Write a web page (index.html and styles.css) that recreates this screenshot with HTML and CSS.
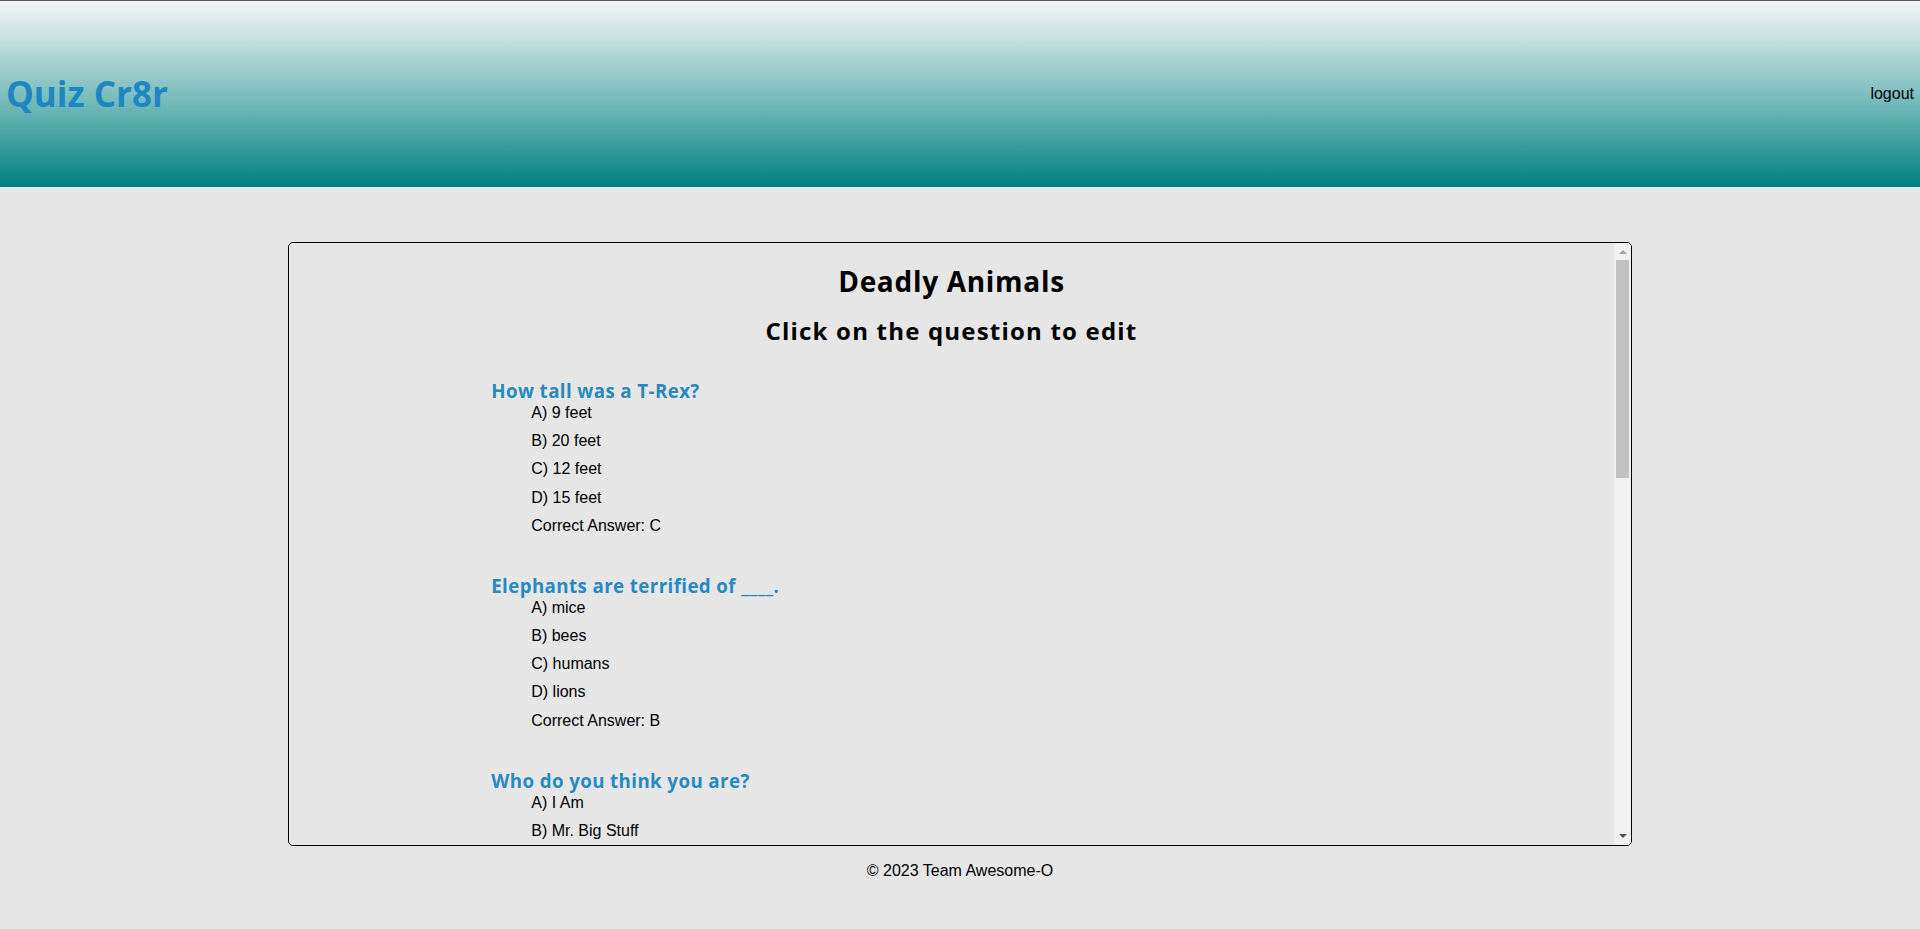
FILE: index.html
```html
<!DOCTYPE html>
<html lang="en">
<head>
<meta charset="utf-8">
<title>Quiz Cr8r</title>
<link rel="stylesheet" href="styles.css">
</head>
<body>
<header class="site-header">
  <h1 class="brand">Quiz Cr8r</h1>
  <a class="logout" href="#">logout</a>
</header>
<main class="main">
  <section class="quiz-frame">
    <div class="quiz-scroll">
      <h1 class="quiz-title">Deadly Animals</h1>
      <h2 class="quiz-sub">Click on the question to edit</h2>
      <div class="questions">
        <div class="question">
          <h3 class="q-text">How tall was a T-Rex?</h3>
          <ul class="answers">
            <li>A) 9 feet</li>
            <li>B) 20 feet</li>
            <li>C) 12 feet</li>
            <li>D) 15 feet</li>
            <li>Correct Answer: C</li>
          </ul>
        </div>
        <div class="question">
          <h3 class="q-text">Elephants are terrified of ____.</h3>
          <ul class="answers">
            <li>A) mice</li>
            <li>B) bees</li>
            <li>C) humans</li>
            <li>D) lions</li>
            <li>Correct Answer: B</li>
          </ul>
        </div>
        <div class="question">
          <h3 class="q-text">Who do you think you are?</h3>
          <ul class="answers">
            <li>A) I Am</li>
            <li>B) Mr. Big Stuff</li>
            <li>C) Nobody</li>
            <li>D) Somebody</li>
            <li>Correct Answer: B</li>
          </ul>
        </div>
        <div class="question">
          <h3 class="q-text">Which animal causes the most human deaths?</h3>
          <ul class="answers">
            <li>A) Shark</li>
            <li>B) Snake</li>
            <li>C) Mosquito</li>
            <li>D) Hippo</li>
            <li>Correct Answer: C</li>
          </ul>
        </div>
        <div class="question">
          <h3 class="q-text">The box jellyfish lives mostly in the ____.</h3>
          <ul class="answers">
            <li>A) Arctic</li>
            <li>B) Indo-Pacific</li>
            <li>C) Mediterranean</li>
            <li>D) Great Lakes</li>
            <li>Correct Answer: B</li>
          </ul>
        </div>
        <div class="question">
          <h3 class="q-text">What color is a poison dart frog?</h3>
          <ul class="answers">
            <li>A) Bright blue</li>
            <li>B) Brown</li>
            <li>C) Gray</li>
            <li>D) White</li>
            <li>Correct Answer: A</li>
          </ul>
        </div>
        <div class="question">
          <h3 class="q-text">How fast can a hippo run?</h3>
          <ul class="answers">
            <li>A) 5 mph</li>
            <li>B) 10 mph</li>
            <li>C) 19 mph</li>
            <li>D) 40 mph</li>
            <li>Correct Answer: C</li>
          </ul>
        </div>
      </div>
    </div>
    <div class="scrollbar" aria-hidden="true">
      <div class="sb-btn sb-up"><span class="tri tri-up"></span></div>
      <div class="sb-track"><div class="sb-thumb"></div></div>
      <div class="sb-btn sb-down"><span class="tri tri-down"></span></div>
    </div>
  </section>
</main>
<footer class="site-footer">© 2023 Team Awesome-O</footer>
</body>
</html>
```

FILE: styles.css
```css
html, body {
  margin: 0;
  padding: 0;
}

body {
  background: #e6e6e6;
  font-family: "Liberation Sans", Arial, sans-serif;
  color: #000;
}

.site-header {
  height: 186px;
  border-top: 1px solid #5a5a5a;
  background: linear-gradient(to bottom, #f3f5f5 0%, #c6e0e0 20%, #66b3b3 60%, #008080 100%);
  display: flex;
  align-items: center;
  justify-content: space-between;
  padding: 0 6px;
}

.brand {
  margin: 0;
  font-family: "Open Sans", "Liberation Sans", sans-serif;
  font-size: 35px;
  font-weight: bold;
  color: #1d87c3;
  line-height: 42px;
}

.logout {
  font-size: 16px;
  color: #000;
  text-decoration: none;
}

.main {
  padding-top: 55px;
}

.quiz-frame {
  position: relative;
  box-sizing: border-box;
  width: 70%;
  height: 65vh;
  margin: 0 auto;
  border: 1px solid #000;
  border-radius: 5px;
  overflow: hidden;
}

.quiz-scroll {
  height: 100%;
  overflow-y: auto;
  scrollbar-width: none;
  margin-right: 17px;
}

.quiz-scroll::-webkit-scrollbar {
  display: none;
}

.scrollbar {
  position: absolute;
  top: 0;
  right: 0;
  bottom: 0;
  width: 17px;
  background: #f1f1f1;
  display: flex;
  flex-direction: column;
}

.sb-btn {
  height: 17px;
  flex: none;
  display: flex;
  align-items: center;
  justify-content: center;
}

.sb-track {
  flex: 1;
}

.sb-thumb {
  height: 218px;
  margin: 0 2px;
  background: #c1c1c1;
}

.tri {
  width: 0;
  height: 0;
  border-left: 4px solid transparent;
  border-right: 4px solid transparent;
}

.tri-up {
  border-bottom: 4px solid #a3a3a3;
}

.tri-down {
  border-top: 4px solid #505050;
}

.quiz-title {
  margin: 21px 0 0;
  font-family: "Open Sans", "Liberation Sans", sans-serif;
  font-size: 28px;
  line-height: 34px;
  letter-spacing: 0.7px;
  text-align: center;
}

.quiz-sub {
  margin: 18px 0 0;
  font-family: "Open Sans", "Liberation Sans", sans-serif;
  font-size: 24px;
  line-height: 30px;
  letter-spacing: 1.2px;
  text-align: center;
}

.questions {
  width: 70%;
  margin: 33px auto 0;
  padding-left: 7px;
  padding-bottom: 30px;
}

.question {
  margin-bottom: 38px;
}

.q-text {
  margin: 0;
  font-family: "Open Sans", "Liberation Sans", sans-serif;
  font-size: 18.72px;
  line-height: 24px;
  letter-spacing: 0.4px;
  color: #258ac2;
  font-weight: bold;
}

.answers {
  list-style: none;
  margin: 0;
  padding-left: 40px;
}

.answers li {
  font-size: 16px;
  line-height: 20px;
  margin-bottom: 8.2px;
}

.answers li:last-child {
  margin-bottom: 0;
}

.site-footer {
  text-align: center;
  font-size: 16px;
  line-height: 20px;
  margin-top: 15px;
}
```
